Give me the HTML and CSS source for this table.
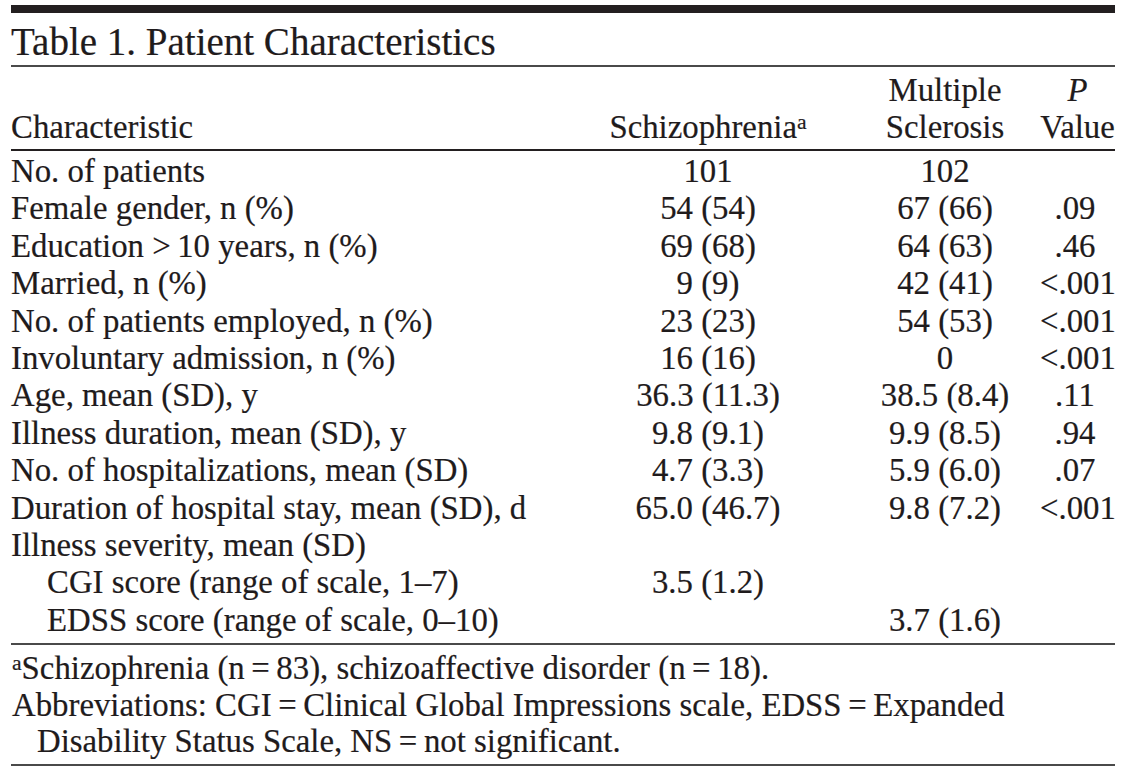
FILE: index.html
```html
<!DOCTYPE html>
<html lang="en">
<head>
<meta charset="utf-8">
<title>Table 1. Patient Characteristics</title>
<link rel="stylesheet" href="styles.css">
</head>
<body>
<div class="page">
  <div class="topbar"></div>
  <h1 class="title">Table 1. Patient Characteristics</h1>
  <table class="data">
    <colgroup>
      <col class="col-char">
      <col class="col-sz">
      <col class="col-ms">
      <col class="col-p">
    </colgroup>
    <thead>
      <tr>
        <th class="label">Characteristic</th>
        <th class="sz">Schizophrenia<sup class="fn">a</sup></th>
        <th class="ms">Multiple<br>Sclerosis</th>
        <th class="pv"><i>P</i><br>Value</th>
      </tr>
    </thead>
    <tbody>
      <tr class="first"><td class="label">No. of patients</td><td class="sz">101</td><td class="ms">102</td><td class="pv"></td></tr>
      <tr><td class="label">Female gender, n (%)</td><td class="sz">54 (54)</td><td class="ms">67 (66)</td><td class="pv">.09</td></tr>
      <tr><td class="label">Education &gt;&thinsp;10 years, n (%)</td><td class="sz">69 (68)</td><td class="ms">64 (63)</td><td class="pv">.46</td></tr>
      <tr><td class="label">Married, n (%)</td><td class="sz">9 (9)</td><td class="ms">42 (41)</td><td class="pv">&lt;.001</td></tr>
      <tr><td class="label">No. of patients employed, n (%)</td><td class="sz">23 (23)</td><td class="ms">54 (53)</td><td class="pv">&lt;.001</td></tr>
      <tr><td class="label">Involuntary admission, n (%)</td><td class="sz">16 (16)</td><td class="ms">0</td><td class="pv">&lt;.001</td></tr>
      <tr><td class="label">Age, mean (SD), y</td><td class="sz">36.3 (11.3)</td><td class="ms">38.5 (8.4)</td><td class="pv">.11</td></tr>
      <tr><td class="label">Illness duration, mean (SD), y</td><td class="sz">9.8 (9.1)</td><td class="ms">9.9 (8.5)</td><td class="pv">.94</td></tr>
      <tr><td class="label">No. of hospitalizations, mean (SD)</td><td class="sz">4.7 (3.3)</td><td class="ms">5.9 (6.0)</td><td class="pv">.07</td></tr>
      <tr><td class="label">Duration of hospital stay, mean (SD), d</td><td class="sz">65.0 (46.7)</td><td class="ms">9.8 (7.2)</td><td class="pv">&lt;.001</td></tr>
      <tr><td class="label">Illness severity, mean (SD)</td><td class="sz"></td><td class="ms"></td><td class="pv"></td></tr>
      <tr><td class="label sub">CGI score (range of scale, 1–7)</td><td class="sz">3.5 (1.2)</td><td class="ms"></td><td class="pv"></td></tr>
      <tr class="last"><td class="label sub">EDSS score (range of scale, 0–10)</td><td class="sz"></td><td class="ms">3.7 (1.6)</td><td class="pv"></td></tr>
    </tbody>
  </table>
  <div class="notes">
    <p class="note"><sup class="fn">a</sup>Schizophrenia (n&thinsp;=&thinsp;83), schizoaffective disorder (n&thinsp;=&thinsp;18).</p>
    <p class="note">Abbreviations: CGI&thinsp;=&thinsp;Clinical Global Impressions scale, EDSS&thinsp;=&thinsp;Expanded Disability Status Scale, NS&thinsp;=&thinsp;not significant.</p>
  </div>
</div>
</body>
</html>
```

FILE: styles.css
```css
html, body {
  margin: 0;
  padding: 0;
  background: #ffffff;
}

body {
  font-family: "Liberation Serif", "Times New Roman", serif;
  color: #1f1b1c;
  -webkit-text-stroke: 0.2px #1f1b1c;
}

.page {
  width: 1104px;
  margin-left: 11px;
  padding-top: 5px;
}

.topbar {
  height: 8px;
  background: #231f20;
}

.title {
  margin: 0;
  padding-top: 5px;
  font-size: 39px;
  line-height: 47px;
  font-weight: normal;
  border-bottom: 2px solid #4a4a4a;
}

.data {
  width: 1104px;
  border-collapse: collapse;
  table-layout: fixed;
  font-size: 32.8px;
}

.col-char { width: 589px; }
.col-sz { width: 216px; }
.col-ms { width: 224px; }
.col-p { width: 75px; }

.data th,
.data td {
  padding: 0;
  font-weight: normal;
  white-space: nowrap;
}

.data thead th {
  line-height: 37px;
  vertical-align: bottom;
  padding-top: 5px;
  padding-bottom: 3px;
  border-bottom: 2px solid #231f20;
}

.data td {
  line-height: 37.4px;
}

.label {
  text-align: left;
  padding-left: 1px;
}

.sz {
  text-align: center;
}

.data .ms {
  text-align: center;
  padding-left: 54px;
  padding-right: 20px;
}

.data .pv {
  text-align: center;
  padding-right: 5px;
}

.data thead .pv {
  padding-right: 0;
}

.data .sub {
  padding-left: 36px;
}

.data tr.first td {
  padding-top: 2px;
}

.data tr.last td {
  padding-bottom: 4px;
  border-bottom: 2px solid #4a4a4a;
}

.fn {
  font-size: 66%;
  vertical-align: 0.42em;
  line-height: 0;
}

.notes {
  padding-top: 5px;
  padding-bottom: 4px;
  border-bottom: 2px solid #4a4a4a;
  font-size: 32.8px;
  line-height: 36.6px;
}

.note {
  margin: 0;
  padding-left: 26px;
  text-indent: -25px;
  width: 1010px;
}
```
